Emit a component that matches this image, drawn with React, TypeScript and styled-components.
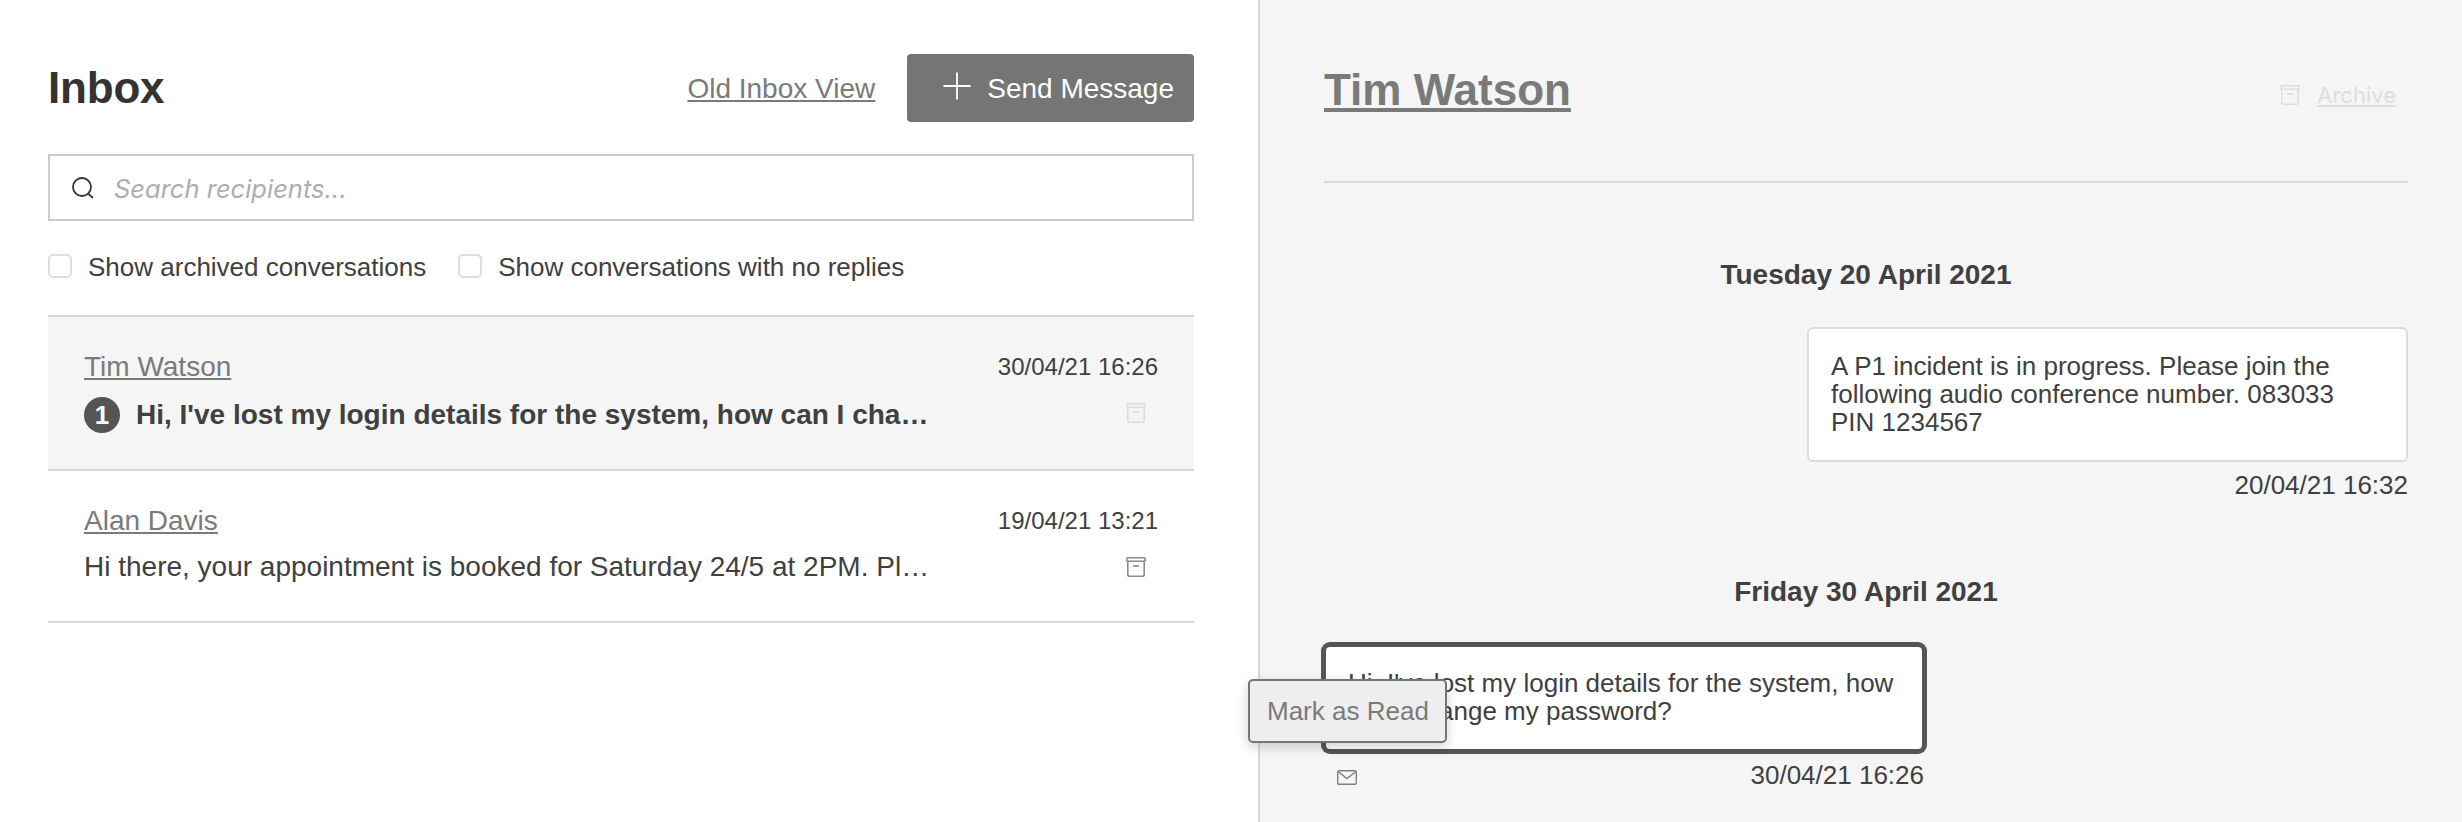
import styled, { createGlobalStyle } from 'styled-components';

const GlobalStyle = createGlobalStyle`
  html, body {
    margin: 0;
    padding: 0;
    background: white;
  }
  body {
    font-family: "Liberation Sans", Arial, sans-serif;
    color: #404040;
  }
  * { box-sizing: border-box; }
`;

const Page = styled.div`
  display: flex;
  width: 2462px;
  height: 822px;
  overflow: hidden;
`;

const InboxPanel = styled.section`
  flex: 0 0 1260px;
  min-width: 0;
  padding: 54px 64px 0 48px;
  border-right: 2px solid #d8d8d8;
`;

const InboxHeader = styled.header`
  display: flex;
  align-items: center;
  justify-content: space-between;
  height: 68px;
  margin-bottom: 32px;
`;

const Title = styled.h1`
  margin: 0;
  font-size: 44px;
  font-weight: 700;
  letter-spacing: -0.2px;
  color: #333;
`;

const HeaderActions = styled.div`
  display: flex;
  align-items: center;
  gap: 32px;
`;

const TextLink = styled.a`
  font-size: 28px;
  color: #7a7a7a;
  text-decoration: underline;
  padding-top: 2px;
`;

const SendButton = styled.button`
  display: flex;
  align-items: center;
  gap: 16px;
  height: 68px;
  padding: 2px 20px 0 36px;
  border: none;
  border-radius: 4px;
  background: #757575;
  color: white;
  font: inherit;
  font-size: 28px;
  svg {
    transform: translateY(-3px);
  }
`;

const SearchBox = styled.label`
  display: flex;
  align-items: center;
  gap: 19px;
  height: 67px;
  padding-left: 21px;
  border: 2px solid #cbcbcb;
  background: white;
`;

const SearchInput = styled.input`
  flex: 1;
  border: none;
  outline: none;
  background: none;
  padding: 2px 0 0;
  font-family: Inter, sans-serif;
  font-size: 25.5px;
  font-style: italic;
  color: #333;
  &::placeholder {
    color: #adadad;
    opacity: 1;
  }
`;

const Filters = styled.div`
  display: flex;
  align-items: center;
  gap: 32px;
  margin-top: 33px;
  margin-bottom: 37px;
  height: 24px;
`;

const Filter = styled.label`
  display: flex;
  align-items: center;
  gap: 16px;
  font-size: 26px;
  line-height: 26px;
`;

const FilterText = styled.span`
  padding-top: 2px;
`;

const Checkbox = styled.input`
  appearance: none;
  width: 24px;
  height: 24px;
  margin: 0;
  border: 2px solid #dedede;
  border-radius: 5px;
  background: white;
`;

const List = styled.div`
  border-top: 2px solid #d8d8d8;
`;

const Row = styled.article<{ $active?: boolean }>`
  display: flex;
  padding: 32px 36px 36px 36px;
  border-bottom: 2px solid #d8d8d8;
  background: ${p => (p.$active ? '#f5f5f5' : 'white')};
`;

const RowMain = styled.div`
  flex: 1;
  min-width: 0;
`;

const RowName = styled.a`
  display: block;
  font-size: 28px;
  line-height: 36px;
  color: #7a7a7a;
  text-decoration: underline;
`;

const Preview = styled.div<{ $unread?: boolean }>`
  display: flex;
  align-items: center;
  gap: 16px;
  margin-top: 12px;
  padding-bottom: ${p => (p.$unread ? '0' : '2px')};
  font-size: 28px;
  line-height: 32px;
  font-weight: ${p => (p.$unread ? 700 : 400)};
`;

const PreviewText = styled.span`
  flex: 1;
  min-width: 0;
  white-space: nowrap;
  overflow: hidden;
  text-overflow: ellipsis;
`;

const Badge = styled.span`
  flex: 0 0 36px;
  display: flex;
  align-items: center;
  justify-content: center;
  height: 36px;
  border-radius: 50%;
  background: #555;
  color: white;
  font-size: 26px;
  font-weight: 700;
`;

const RowSide = styled.div`
  flex: 0 0 228px;
  display: flex;
  flex-direction: column;
  align-items: flex-end;
`;

const RowDate = styled.time`
  font-size: 24px;
  line-height: 36px;
`;

const RowArchive = styled.span<{ $faded?: boolean }>`
  display: flex;
  margin-top: 18px;
  margin-right: 12px;
  color: ${p => (p.$faded ? '#dcdcdc' : '#8a8a8a')};
`;

const ThreadPanel = styled.section`
  flex: 1;
  min-width: 0;
  padding: 0 54px 0 64px;
  background: #f5f5f5;
`;

const ThreadHeader = styled.header`
  display: flex;
  align-items: center;
  justify-content: space-between;
  padding: 62px 0 63px;
  border-bottom: 2px solid #d8d8d8;
`;

const ThreadName = styled.a`
  font-size: 44px;
  line-height: 56px;
  font-weight: 700;
  color: #7a7a7a;
  text-decoration: underline;
`;

const ArchiveAction = styled.div`
  display: flex;
  align-items: center;
  gap: 17px;
  margin-top: 10px;
  margin-right: 12px;
  color: #dedede;
`;

const ArchiveLink = styled.a`
  font-family: Inter, sans-serif;
  font-size: 22px;
  text-decoration: underline;
`;

const DayLabel = styled.h2<{ $later?: boolean }>`
  margin: 76px 0 ${p => (p.$later ? '37px' : '36px')};
  text-align: center;
  font-size: 28px;
  line-height: 32px;
  font-weight: 700;
`;

const Message = styled.div<{ $outgoing?: boolean }>`
  position: relative;
  width: ${p => (p.$outgoing ? '601px' : '600px')};
  margin-left: ${p => (p.$outgoing ? 'auto' : '0')};
`;

const Bubble = styled.div<{ $focused?: boolean }>`
  padding: ${p => (p.$focused ? '22px 22px 24px' : '23px 22px 24px')};
  margin-bottom: ${p => (p.$focused ? '0' : '-1px')};
  border: 2px solid ${p => (p.$focused ? '#555' : '#dcdcdc')};
  border-radius: 6px;
  background: white;
  font-size: 26px;
  line-height: 28px;
  box-shadow: ${p => (p.$focused ? '0 0 0 3px #555' : 'none')};
`;

const MessageFoot = styled.div`
  display: flex;
  align-items: center;
  justify-content: space-between;
  margin-top: 9px;
  height: 30px;
`;

const MailButton = styled.span`
  display: flex;
  margin-left: 13px;
  margin-top: 4px;
  color: #808080;
`;

const MessageTime = styled.time`
  margin-left: auto;
  font-size: 26px;
`;

const Tooltip = styled.div`
  position: absolute;
  left: -76px;
  top: 34px;
  padding: 0 16px 0 17px;
  height: 64px;
  display: flex;
  align-items: center;
  border: 2px solid #757575;
  border-radius: 5px;
  background: #eee;
  font-size: 26px;
  color: #7a7a7a;
  box-shadow: 0 4px 12px rgba(0, 0, 0, 0.18);
`;

function ArchiveIcon() {
  return (
    <svg width="20" height="20" viewBox="0 0 20 20" fill="none" stroke="currentColor" strokeWidth="1.6">
      <rect x="0.8" y="0.8" width="18.4" height="3.4" rx="1" />
      <path d="M1.8 4.2V17.8a1.4 1.4 0 0 0 1.4 1.4H16.8a1.4 1.4 0 0 0 1.4-1.4V4.2" />
      <path d="M7 9h6" />
    </svg>
  );
}

function PlusIcon() {
  return (
    <svg width="28" height="28" viewBox="0 0 28 28" fill="none" stroke="white" strokeWidth="1.8">
      <path d="M14 0.5V27.5M0.5 14H27.5" />
    </svg>
  );
}

function SearchIcon() {
  return (
    <svg width="24" height="24" viewBox="0 0 24 24" fill="none" stroke="#333" strokeWidth="1.8" style={{ flex: 'none' }}>
      <circle cx="11" cy="11" r="9" />
      <path d="M17.4 17.8L22 22" />
    </svg>
  );
}

function MailIcon() {
  return (
    <svg width="20" height="15" viewBox="0 0 20 15" fill="none" stroke="currentColor" strokeWidth="1.4">
      <rect x="0.7" y="0.7" width="18.6" height="13.6" rx="1.4" />
      <path d="M1 1.5L10 8.5L19 1.5" />
    </svg>
  );
}

export default function App() {
  return (
    <Page>
      <GlobalStyle />
      <InboxPanel>
        <InboxHeader>
          <Title>Inbox</Title>
          <HeaderActions>
            <TextLink>Old Inbox View</TextLink>
            <SendButton><PlusIcon />Send Message</SendButton>
          </HeaderActions>
        </InboxHeader>
        <SearchBox>
          <SearchIcon />
          <SearchInput placeholder="Search recipients..." />
        </SearchBox>
        <Filters>
          <Filter><Checkbox type="checkbox" /><FilterText>Show archived conversations</FilterText></Filter>
          <Filter><Checkbox type="checkbox" /><FilterText>Show conversations with no replies</FilterText></Filter>
        </Filters>
        <List>
          <Row $active>
            <RowMain>
              <RowName>Tim Watson</RowName>
              <Preview $unread>
                <Badge>1</Badge>
                <PreviewText>Hi, I've lost my login details for the system, how can I change my password?</PreviewText>
              </Preview>
            </RowMain>
            <RowSide>
              <RowDate>30/04/21 16:26</RowDate>
              <RowArchive $faded><ArchiveIcon /></RowArchive>
            </RowSide>
          </Row>
          <Row>
            <RowMain>
              <RowName>Alan Davis</RowName>
              <Preview>
                <PreviewText>Hi there, your appointment is booked for Saturday 24/5 at 2PM. Please arrive ten minutes early.</PreviewText>
              </Preview>
            </RowMain>
            <RowSide>
              <RowDate>19/04/21 13:21</RowDate>
              <RowArchive><ArchiveIcon /></RowArchive>
            </RowSide>
          </Row>
        </List>
      </InboxPanel>
      <ThreadPanel>
        <ThreadHeader>
          <ThreadName>Tim Watson</ThreadName>
          <ArchiveAction>
            <ArchiveIcon />
            <ArchiveLink>Archive</ArchiveLink>
          </ArchiveAction>
        </ThreadHeader>
        <DayLabel>Tuesday 20 April 2021</DayLabel>
        <Message $outgoing>
          <Bubble>A P1 incident is in progress. Please join the following audio conference number. 083033 PIN 1234567</Bubble>
          <MessageFoot>
            <MessageTime>20/04/21 16:32</MessageTime>
          </MessageFoot>
        </Message>
        <DayLabel $later>Friday 30 April 2021</DayLabel>
        <Message>
          <Bubble $focused>Hi, I've lost my login details for the system, how can I change my password?</Bubble>
          <Tooltip>Mark as Read</Tooltip>
          <MessageFoot>
            <MailButton><MailIcon /></MailButton>
            <MessageTime>30/04/21 16:26</MessageTime>
          </MessageFoot>
        </Message>
      </ThreadPanel>
    </Page>
  );
}
